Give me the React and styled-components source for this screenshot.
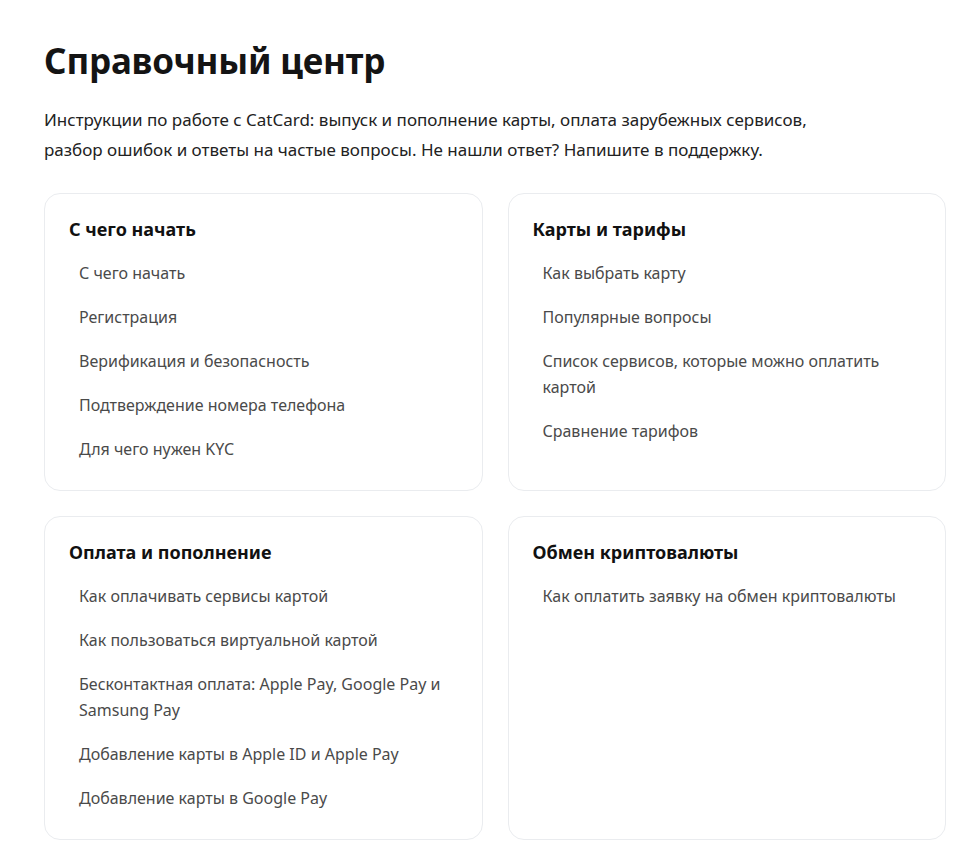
import styled, { createGlobalStyle } from 'styled-components'

const GlobalStyle = createGlobalStyle`
  body {
    margin: 0;
    background: #ffffff;
    font-family: 'Noto Sans', 'Open Sans', Arial, sans-serif;
    -webkit-font-smoothing: antialiased;
  }
`

const Page = styled.main`
  padding: 38px 28px 20px 44px;
  max-width: 902px;
`

const Title = styled.h1`
  margin: 0;
  font-size: 35px;
  line-height: 46px;
  font-weight: 700;
  color: #141414;
  letter-spacing: -0.2px;
`

const Lead = styled.p`
  margin: 21px 0 0;
  max-width: 790px;
  font-size: 17px;
  line-height: 30px;
  color: #222;
`

const Grid = styled.div`
  display: grid;
  grid-template-columns: 1fr 1fr;
  gap: 25px;
  margin-top: 28px;
`

const Card = styled.section`
  border: 1px solid #eaecef;
  border-radius: 16px;
  padding: 22px 24px 19px;
`

const CardTitle = styled.h2`
  margin: 0 0 9px;
  font-size: 18px;
  line-height: 26px;
  font-weight: 700;
  color: #111;
`

const Links = styled.ul`
  list-style: none;
  margin: 0;
  padding: 0;
`

const LinkItem = styled.li`
  padding: 9px 10px;
  font-size: 16px;
  line-height: 26px;
  color: #4a4a4a;
  cursor: pointer;
`

const sections = [
  {
    title: 'С чего начать',
    links: [
      'С чего начать',
      'Регистрация',
      'Верификация и безопасность',
      'Подтверждение номера телефона',
      'Для чего нужен KYC',
    ],
  },
  {
    title: 'Карты и тарифы',
    links: [
      'Как выбрать карту',
      'Популярные вопросы',
      'Список сервисов, которые можно оплатить картой',
      'Сравнение тарифов',
    ],
  },
  {
    title: 'Оплата и пополнение',
    links: [
      'Как оплачивать сервисы картой',
      'Как пользоваться виртуальной картой',
      'Бесконтактная оплата: Apple Pay, Google Pay и Samsung Pay',
      'Добавление карты в Apple ID и Apple Pay',
      'Добавление карты в Google Pay',
    ],
  },
  {
    title: 'Обмен криптовалюты',
    links: ['Как оплатить заявку на обмен криптовалюты'],
  },
]

const App = () => (
  <>
    <GlobalStyle />
    <Page>
      <Title>Справочный центр</Title>
      <Lead>
        Инструкции по работе с CatCard: выпуск и пополнение карты, оплата зарубежных сервисов,
        разбор ошибок и ответы на частые вопросы. Не нашли ответ? Напишите в поддержку.
      </Lead>
      <Grid>
        {sections.map((s) => (
          <Card key={s.title}>
            <CardTitle>{s.title}</CardTitle>
            <Links>
              {s.links.map((l) => (
                <LinkItem key={l}>{l}</LinkItem>
              ))}
            </Links>
          </Card>
        ))}
      </Grid>
    </Page>
  </>
)

export default App
